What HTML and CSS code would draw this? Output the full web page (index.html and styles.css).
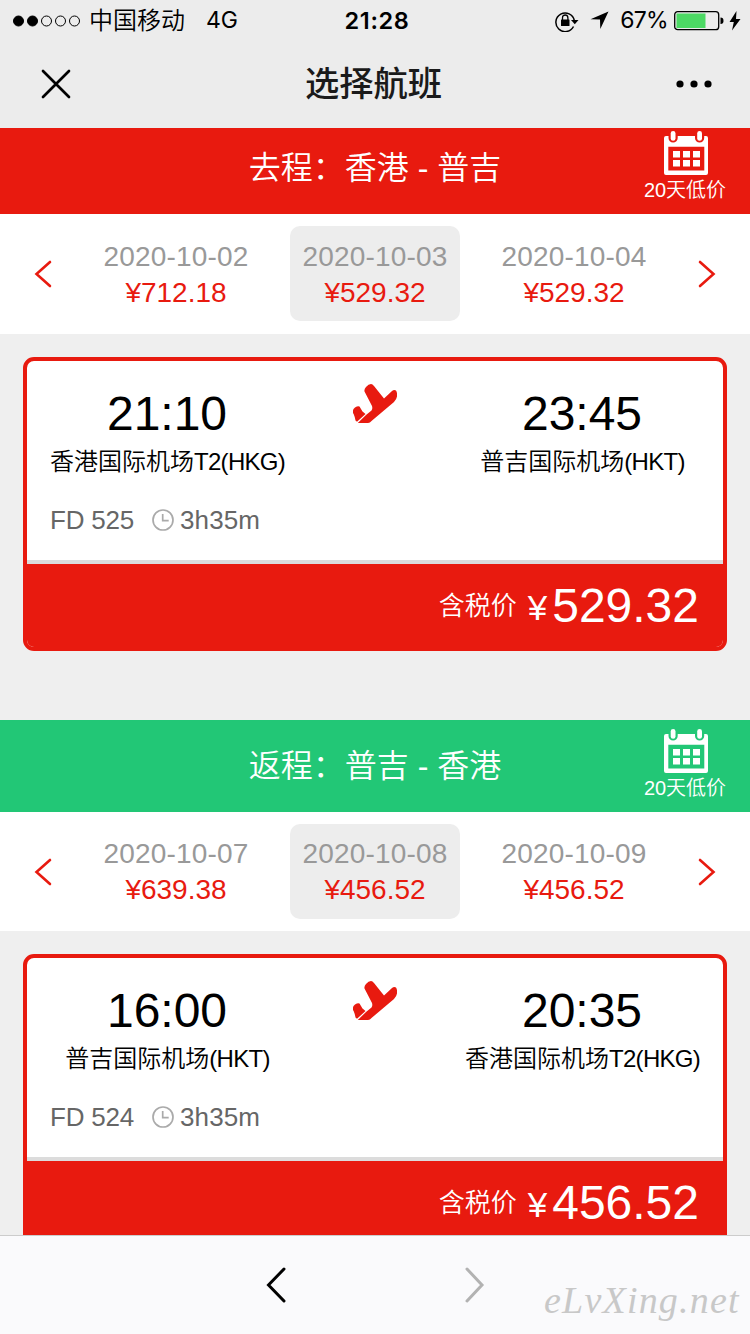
FILE: index.html
```html
<!DOCTYPE html>
<html lang="zh-CN">
<head>
<meta charset="utf-8">
<title>选择航班</title>
<link rel="stylesheet" href="styles.css">
</head>
<body>
<svg class="defs" width="0" height="0" aria-hidden="true">
  <symbol id="calendar" viewBox="0 0 44 44">
    <path fill="currentColor" fill-rule="evenodd" d="M2 5H4.500V7a4.600 4.600 0 0 0 9.200 0V5H31V7a4.600 4.600 0 0 0 9.200 0V5H42q2 0 2 2v35q0 2-2 2H2q-2 0-2-2V7q0-2 2-2zM4.300 15.700v23.700h36V15.700z"/>
    <rect x="6.700" y="0" width="4.800" height="9.800" rx="2.400" fill="currentColor"/>
    <rect x="33.200" y="0" width="4.800" height="9.800" rx="2.400" fill="currentColor"/>
    <path fill="currentColor" d="M9 20h7v6.500H9zM19 20h7v6.500h-7zM29 20h7v6.500h-7zM9 29h7v6.500H9zM19 29h7v6.500h-7zM29 29h7v6.500h-7z"/>
  </symbol>
  <symbol id="plane" viewBox="0 0 44 39">
    <path fill="currentColor" d="M4.800 39L13 31L18.500 26.500Q19.800 25 19 22L11.500 7.500Q11 5 13 3Q15.500 0 18 0Q19.500 0 21 2L31 14.500L39 7Q41 5.500 43 6.500Q44.500 9 44 12.500Q43.500 15.500 41 18L18.500 37Q17 39 15 39z"/>
    <path fill="currentColor" d="M0 26.500Q0 25 2 23.500Q5 21.500 6.500 22.500L9.500 27.500L12.500 30L4 37.800L2.500 36.500Q1.500 31 0 29z"/>
  </symbol>
  <symbol id="clock" viewBox="0 0 22 22">
    <circle cx="11" cy="11" r="10" fill="none" stroke="currentColor" stroke-width="1.700"/>
    <path d="M10.700 5v6.700h6" fill="none" stroke="currentColor" stroke-width="1.700"/>
  </symbol>
  <symbol id="left" viewBox="0 0 18 28">
    <path d="M16 2L2.500 14L16 26" fill="none" stroke="currentColor" stroke-width="2.600" stroke-linecap="round"/>
  </symbol>
  <symbol id="right" viewBox="0 0 18 28">
    <path d="M2 2L15.500 14L2 26" fill="none" stroke="currentColor" stroke-width="2.600" stroke-linecap="round"/>
  </symbol>
</svg>

<div class="phone">
  <header class="status">
    <div class="carrier">
      <svg width="68" height="12" viewBox="0 0 68 12"><g stroke="#000"><circle cx="5.500" cy="6" r="5"/><circle cx="19.500" cy="6" r="5"/><g fill="none"><circle cx="33.500" cy="6" r="5"/><circle cx="47.500" cy="6" r="5"/><circle cx="61.500" cy="6" r="5"/></g></g></svg>
      <span class="operator">中国移动</span><span class="network">4G</span>
    </div>
    <div class="clock-time">21:28</div>
    <div class="indicators">
      <svg width="24" height="22" viewBox="0 0 24 22"><path d="M18.500 16.500A9.300 9.300 0 1 1 19.300 10.500" fill="none" stroke="#000" stroke-width="1.500"/><path d="M16 10h7.500l-3.700 4.200z"/><rect x="6" y="9.500" width="8.500" height="6.500" rx=".5"/><path d="M7.500 10V8q0-3 2.700-3t2.700 3v2" fill="none" stroke="#000" stroke-width="1.300"/></svg>
      <svg class="locate" width="19" height="19" viewBox="0 0 19 19"><path d="M18.500.5L10.300 18L10 8.500L.5 8.200z"/></svg>
      <span class="percent">67%</span>
      <svg width="50" height="20" viewBox="0 0 50 20"><rect x=".7" y=".7" width="44" height="18" rx="3" fill="none" stroke="#000" stroke-width="1.300"/><rect x="2.500" y="2.500" width="29" height="14.500" fill="#4cd964"/><path d="M46.500 6.500q3 0 3 3.300t-3 3.200z"/></svg>
      <svg class="bolt" width="12" height="20" viewBox="0 0 12 20"><path d="M7.500 0L.5 11h4.300L3 19.500L11.500 8H7z"/></svg>
    </div>
  </header>
  <nav class="nav">
    <svg width="30" height="30" viewBox="0 0 30 30"><path d="M2 2L28 28M28 2L2 28" stroke="#000" stroke-width="2.700" stroke-linecap="round"/></svg>
    <h1 class="title">选择航班</h1>
    <svg width="36" height="8" viewBox="0 0 36 8"><circle cx="4" cy="4" r="3.600"/><circle cx="18" cy="4" r="3.600"/><circle cx="32" cy="4" r="3.600"/></svg>
  </nav>

  <main class="content">
    <section class="trip trip-out">
      <div class="route">
        <h2 class="route-name">去程：香港 - 普吉</h2>
        <div class="low-fare"><svg width="44" height="44"><use href="#calendar"/></svg><span>20天低价</span></div>
      </div>
      <div class="dates">
        <svg class="arrow" width="18" height="28"><use href="#left"/></svg>
        <div class="date"><span class="day">2020-10-02</span><span class="fare">¥712.18</span></div>
        <div class="date selected"><span class="day">2020-10-03</span><span class="fare">¥529.32</span></div>
        <div class="date"><span class="day">2020-10-04</span><span class="fare">¥529.32</span></div>
        <svg class="arrow" width="18" height="28"><use href="#right"/></svg>
      </div>
      <article class="card">
        <div class="flight">
          <div class="stop"><div class="time">21:10</div><div class="airport">香港国际机场<span class="code">T2(HKG)</span></div></div>
          <svg class="plane" width="44" height="39"><use href="#plane"/></svg>
          <div class="stop"><div class="time">23:45</div><div class="airport">普吉国际机场<span class="code">(HKT)</span></div></div>
        </div>
        <div class="meta"><span>FD 525</span><svg class="clock" width="22" height="22"><use href="#clock"/></svg><span class="duration">3h35m</span></div>
        <div class="total"><span class="label">含税价</span><span class="yen">¥</span><span class="amount">529.32</span></div>
      </article>
    </section>

    <section class="trip trip-back">
      <div class="route">
        <h2 class="route-name">返程：普吉 - 香港</h2>
        <div class="low-fare"><svg width="44" height="44"><use href="#calendar"/></svg><span>20天低价</span></div>
      </div>
      <div class="dates">
        <svg class="arrow" width="18" height="28"><use href="#left"/></svg>
        <div class="date"><span class="day">2020-10-07</span><span class="fare">¥639.38</span></div>
        <div class="date selected"><span class="day">2020-10-08</span><span class="fare">¥456.52</span></div>
        <div class="date"><span class="day">2020-10-09</span><span class="fare">¥456.52</span></div>
        <svg class="arrow" width="18" height="28"><use href="#right"/></svg>
      </div>
      <article class="card">
        <div class="flight">
          <div class="stop"><div class="time">16:00</div><div class="airport">普吉国际机场<span class="code">(HKT)</span></div></div>
          <svg class="plane" width="44" height="39"><use href="#plane"/></svg>
          <div class="stop"><div class="time">20:35</div><div class="airport">香港国际机场<span class="code">T2(HKG)</span></div></div>
        </div>
        <div class="meta"><span>FD 524</span><svg class="clock" width="22" height="22"><use href="#clock"/></svg><span class="duration">3h35m</span></div>
        <div class="total"><span class="label">含税价</span><span class="yen">¥</span><span class="amount">456.52</span></div>
      </article>
    </section>
  </main>

  <footer class="toolbar">
    <svg width="22" height="36" viewBox="0 0 22 36"><path d="M18 2L2.500 18L18 34" fill="none" stroke="#000" stroke-width="3" stroke-linecap="round"/></svg>
    <svg width="22" height="36" viewBox="0 0 22 36"><path d="M3 2L18 18L3 34" fill="none" stroke="#b2b2b2" stroke-width="3" stroke-linecap="round"/></svg>
    <span class="watermark">eLvXing.net</span>
  </footer>
</div>
</body>
</html>
```
FILE: styles.css
```css
* { box-sizing: border-box; }
body {
  margin: 0;
  font-family: "Liberation Sans", "Noto Sans CJK SC", sans-serif;
  color: #000;
}
svg { display: block; flex: none; }
.defs { position: absolute; }
.phone {
  display: flex;
  flex-direction: column;
  width: 750px;
  height: 1334px;
  overflow: hidden;
  background: #efefef;
}

.status {
  display: grid;
  grid-template-columns: 1fr 80px 1fr;
  align-items: center;
  height: 40px;
  padding: 1px 9px 0 13px;
  background: #ececec;
  font-size: 24px;
  line-height: 39px;
}
.carrier, .indicators { display: flex; align-items: center; }
.indicators { justify-content: flex-end; }
.operator { margin-left: 8px; font-weight: 350; }
.network { margin-left: 21px; font-family: Inter, sans-serif; font-size: 23px; }
.clock-time {
  font-family: Inter, sans-serif;
  font-size: 23.5px;
  font-weight: 600;
  letter-spacing: 0.6px;
  text-align: center;
}
.locate { margin-left: 11px; }
.percent {
  margin: 0 6px 0 11px;
  font-family: Inter, sans-serif;
  font-size: 23px;
  letter-spacing: -0.7px;
}
.bolt { margin-left: 5px; }

.nav {
  display: flex;
  align-items: center;
  justify-content: space-between;
  flex: none;
  height: 88px;
  padding: 0 38px 0 41px;
  background: #ececec;
}
.title {
  margin: 0;
  color: #1a1a1a;
  font-size: 34.300px;
  font-weight: 500;
  line-height: 88px;
}

.content { flex: 1; min-height: 0; overflow: hidden; }
.trip-out { margin-top: -6px; height: 598px; }
.route {
  display: grid;
  grid-template-columns: 1fr 270px 1fr;
  height: 92px;
  background: #e81a0f;
  color: #fff;
}
.trip-back .route { background: #22c776; }
.route-name {
  grid-column: 2;
  margin: 0;
  font-size: 32px;
  font-weight: 350;
  line-height: 93px;
  text-align: center;
  white-space: nowrap;
}
.low-fare {
  display: flex;
  flex-direction: column;
  align-items: center;
  justify-self: end;
  width: 128px;
  padding-top: 9px;
  font-size: 20px;
  font-weight: 350;
  line-height: 30px;
}
.low-fare span { margin-right: 2px; }

.dates {
  display: flex;
  justify-content: space-between;
  height: 120px;
  padding: 12px 34px;
  background: #fff;
}
.arrow { margin-top: 34px; color: #e81a0f; }
.arrow:first-child { margin-right: 10px; }
.arrow:last-child { margin-left: 10px; }
.date {
  display: flex;
  flex-direction: column;
  align-items: center;
  width: 170px;
  height: 95px;
  padding-top: 13px;
  border-radius: 10px;
  font-size: 28px;
  line-height: 36px;
  white-space: nowrap;
}
.trip-back .dates { height: 119px; }
.trip-back .date { padding-top: 12px; }
.selected { background: #ededed; }
.day { color: #999; letter-spacing: 0.2px; }
.fare { color: #e81a0f; }

.card {
  margin: 23px 23px 0;
  overflow: hidden;
  border: 4px solid #e81a0f;
  border-radius: 11px;
  background: #fff;
}
.flight {
  display: grid;
  grid-template-columns: 235px 44px 235px;
  justify-content: space-between;
  padding: 23px 23px 0;
}
.stop { text-align: center; white-space: nowrap; }
.time { margin-left: -1px; font-size: 48px; line-height: 60px; }
.airport { font-size: 24px; font-weight: 350; line-height: 36px; }
.code { letter-spacing: -0.7px; }
.plane { color: #e81a0f; }
.meta {
  display: flex;
  align-items: center;
  height: 84px;
  padding: 5px 23px;
  border-bottom: 4px solid #dcdcdc;
  color: #666;
  font-size: 26px;
  letter-spacing: -0.2px;
}
.clock { margin: 0 6px 0 18px; color: #aaa; }
.duration { letter-spacing: 0.1px; }
.total {
  display: flex;
  align-items: center;
  justify-content: flex-end;
  height: 83px;
  padding-right: 24px;
  background: #e81a0f;
  color: #fff;
  line-height: 82px;
}
.label { font-size: 26px; font-weight: 350; }
.yen { margin: 4px 5px 0 11px; font-size: 35px; }
.amount { font-size: 48px; }

.toolbar {
  display: grid;
  grid-template-columns: 22px 22px 204px;
  align-items: center;
  flex: none;
  height: 99px;
  padding-left: 266px;
  column-gap: 176px;
  border-top: 1px solid #ccc;
  background: #fafafc;
}
.watermark {
  margin-left: -118px;
  padding-top: 30px;
  color: #c8c8c8;
  font-family: "Liberation Serif", serif;
  font-size: 38px;
  font-style: italic;
  letter-spacing: 1.200px;
}
```
